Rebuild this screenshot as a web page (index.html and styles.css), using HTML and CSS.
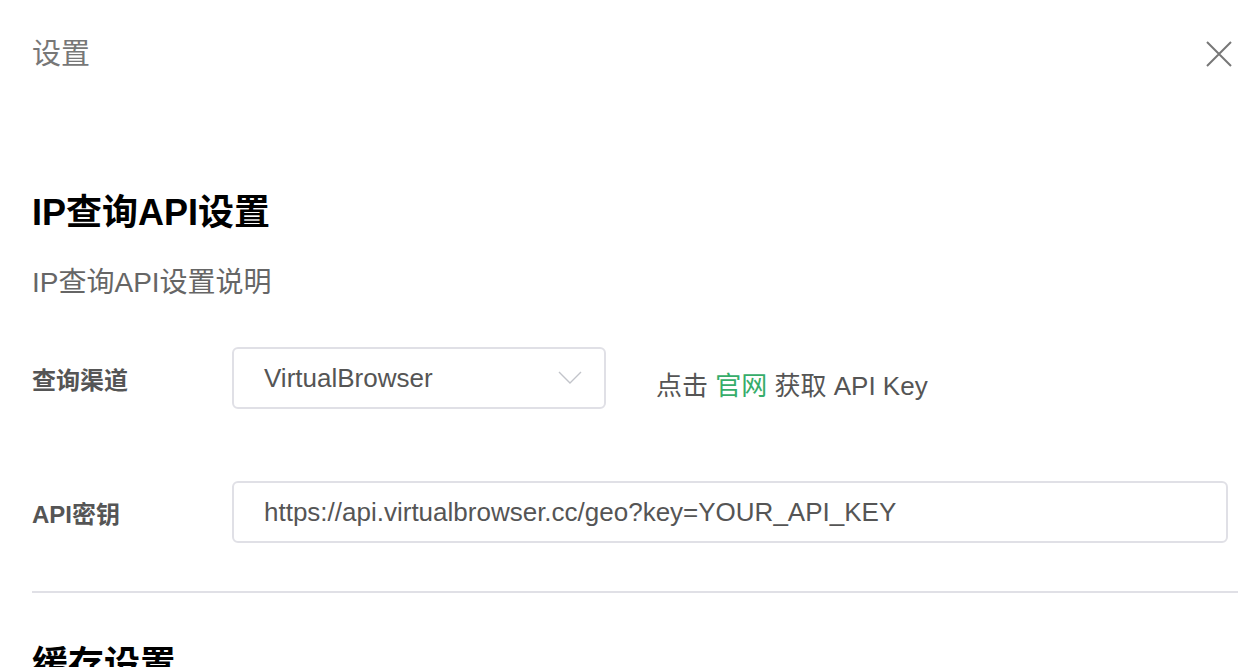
FILE: index.html
```html
<!DOCTYPE html>
<html lang="zh-CN">
<head>
    <meta charset="UTF-8">
    <meta name="viewport" content="width=device-width, initial-scale=1.0">
    <title>设置</title>
    <link rel="stylesheet" href="styles.css">
</head>
<body>

    <div class="dialog">
        <div class="dialog-header">
            <span class="dialog-title">设置</span>
            <span class="dialog-close">
                <svg width="28" height="28" viewBox="0 0 28 28">
                    <path d="M2 2 L26 26 M26 2 L2 26" stroke="#777" stroke-width="2" fill="none"/>
                </svg>
            </span>
        </div>

        <div class="section">
            <h2 class="section-title">IP查询API设置</h2>
            <p class="section-desc">IP查询API设置说明</p>

            <div class="form-item">
                <label class="form-label">查询渠道</label>
                <div class="select">
                    <span class="select-value">VirtualBrowser</span>
                    <svg class="select-arrow" width="24" height="14" viewBox="0 0 24 14">
                        <path d="M1 1 L12 12 L23 1" stroke="#c2c4ca" stroke-width="1.4" fill="none"/>
                    </svg>
                </div>
                <span class="form-hint">点击 <a class="link">官网</a> 获取 API Key</span>
            </div>

            <div class="form-item">
                <label class="form-label">API密钥</label>
                <div class="input">https://api.virtualbrowser.cc/geo?key=YOUR_API_KEY</div>
            </div>
        </div>

        <div class="divider"></div>

        <div class="section">
            <h2 class="section-title">缓存设置</h2>
        </div>
    </div>

</body>
</html>
```

FILE: styles.css
```css
body {
    font-family: "Liberation Sans", "Noto Sans CJK SC", sans-serif;
    background-color: #ffffff;
    color: #333333;
    margin: 0;
    overflow: hidden;
}
.dialog {
    padding: 0 22px 0 32px;
}
.dialog-header {
    display: flex;
    justify-content: space-between;
    align-items: center;
    padding-top: 36px;
    height: 36px;
}
.dialog-title {
    font-size: 29px;
    line-height: 36px;
    color: #777777;
}
.dialog-close {
    display: flex;
    margin-right: 5px;
    cursor: pointer;
}
.section-title {
    font-size: 36px;
    line-height: 44px;
    font-weight: bold;
    color: #000000;
    margin: 119px 0 0;
}
.section-desc {
    font-size: 28px;
    line-height: 40px;
    color: #666666;
    margin: 28px 0 44px;
}
.form-item {
    display: flex;
    align-items: center;
    margin-right: 10px;
    margin-bottom: 72px;
}
.form-item:last-child {
    margin-bottom: 48px;
}
.form-label {
    width: 200px;
    flex-shrink: 0;
    font-size: 24px;
    font-weight: bold;
    color: #555555;
}
.select, .input {
    box-sizing: border-box;
    height: 62px;
    border: 2px solid #e0e0e6;
    border-radius: 6px;
    padding: 0 30px;
    font-size: 26px;
    color: #555555;
    display: flex;
    align-items: center;
}
.select {
    width: 374px;
    justify-content: space-between;
    padding-right: 22px;
}
.input {
    flex: 1;
}
.form-hint {
    font-size: 26px;
    line-height: 40px;
    color: #555555;
    margin-left: 50px;
    margin-top: 16px;
}
.link {
    color: #36ad6a;
    cursor: pointer;
}
.divider {
    height: 2px;
    background-color: #e0e0e6;
}
.section:last-child .section-title {
    margin-top: 50px;
}
```
